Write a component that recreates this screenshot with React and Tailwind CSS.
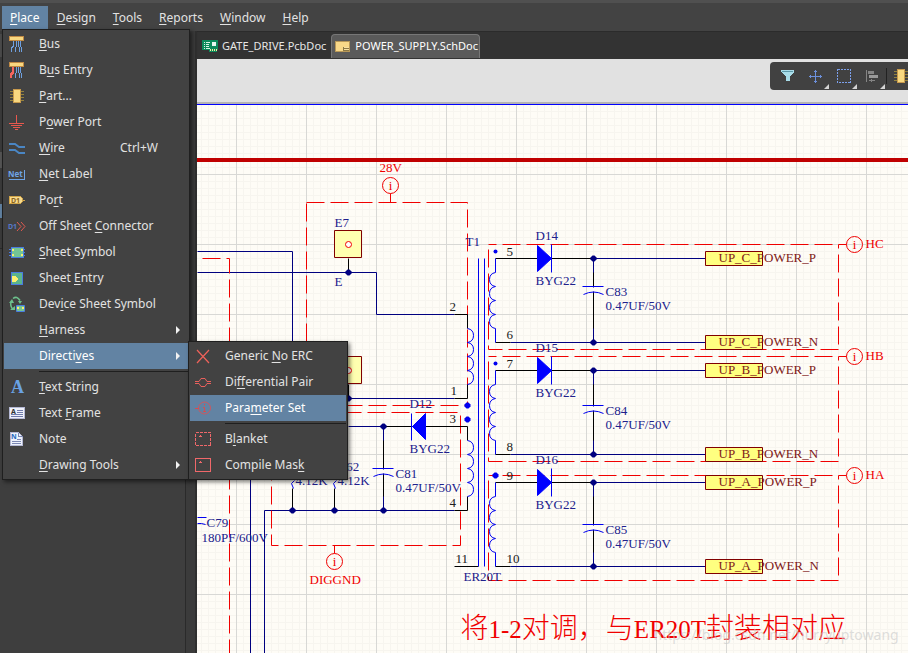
import clsx from "clsx";

const MENU_BAR = ["&Place", "&Design", "&Tools", "&Reports", "&Window", "&Help"];

const PLACE_MENU = [
  { label: "&Bus", icon: "bus" },
  { label: "B&us Entry", icon: "busEntry" },
  { label: "&Part...", icon: "part" },
  { label: "P&ower Port", icon: "power" },
  { label: "&Wire", icon: "wire", shortcut: "Ctrl+W" },
  { label: "&Net Label", icon: "net" },
  { label: "Po&rt", icon: "port" },
  { label: "Off Sheet &Connector", icon: "offSheet" },
  { label: "&Sheet Symbol", icon: "sheetSymbol" },
  { label: "Sheet &Entry", icon: "sheetEntry" },
  { label: "Dev&ice Sheet Symbol", icon: "device" },
  { label: "&Harness", arrow: true },
  { label: "Directi&ves", arrow: true, active: true, submenu: true },
  { separator: true },
  { label: "&Text String", icon: "textString" },
  { label: "Text &Frame", icon: "textFrame" },
  { label: "Note", icon: "note" },
  { label: "&Drawing Tools", arrow: true },
];

const DIRECTIVES_MENU = [
  { label: "Generic &No ERC", icon: "noErc" },
  { label: "Di&fferential Pair", icon: "diffPair" },
  { label: "Para&meter Set", icon: "paramSet", active: true },
  { separator: true },
  { label: "B&lanket", icon: "blanket" },
  { label: "Compile Mas&k", icon: "mask" },
];

const busBar = <path d="M0.5 0.5h14v4h-14z" fill="#f8d880" stroke="#c08a45" />;

const ICONS = {
  bus: (
    <>
      {busBar}
      <path d="M4.500 5v5l-2 2v4M7.500 5v5l-1 2v4M9.500 5v5l1 2v4M11.500 5v5l1 2v4" fill="none" stroke="#6ea0e0" />
    </>
  ),
  busEntry: (
    <>
      {busBar}
      <path d="M7.500 5v5l-1 2v4M9.500 5v5l1 2v4M11.500 5v5l1 2v4" fill="none" stroke="#6ea0e0" />
      <path d="M3 5h2v6l-2 2v3h-2v-5l2-1z" fill="#f4645c" />
    </>
  ),
  part: (
    <>
      <path d="M1 3.500h14M1 6.500h14M1 9.500h14M1 12.500h14" stroke="#94823e" />
      <path d="M4.500 1.500h7v13h-7z" fill="#f8d880" stroke="#c89a4c" />
    </>
  ),
  power: (
    <path d="M7.500 1v9M0 9.500h15M2 11.500h11M4 13.500h7M6 15.500h3" stroke="#e8584e" fill="none" />
  ),
  wire: (
    <path d="M0 4h6l4 3h6M0 10h6l4 3h6" stroke="#4a86c4" strokeWidth="2" fill="none" />
  ),
  net: (
    <>
      <text x="-1" y="11" fontSize="8" fontWeight="700" fill="#6ea4e6">Net</text>
      <path d="M0 13.500h16M15.500 4v9" stroke="#6ea4e6" />
    </>
  ),
  port: (
    <>
      <path d="M0.500 4.500h11l2 2v3l-2 2h-11z" fill="#f8dc90" stroke="#d0a448" />
      <path d="M13 8.500h3" stroke="#d0a448" />
      <text x="2" y="11" fontSize="7" fontWeight="700" fill="#8a6420">D1</text>
    </>
  ),
  offSheet: (
    <>
      <text x="-1" y="11" fontSize="7" fontWeight="700" fill="#5878c8">D1</text>
      <path d="M8 4l4 4.500-4 4.500M12 4l4 4.500-4 4.500" fill="none" stroke="#e05a50" />
    </>
  ),
  sheetSymbol: (
    <>
      <path d="M2.500 3.500h12v10h-12z" fill="#74c494" stroke="#4a7ce0" />
      <path d="M0 5.500h3M0 8.500h3M0 11.500h3M14 5.500h2M14 8.500h2M14 11.500h2" stroke="#4a7ce0" />
      <path d="M3 5h2v2h-2zM3 10h2v2h-2zM12 5h2v2h-2zM12 10h2v2h-2z" fill="#f8ee70" />
    </>
  ),
  sheetEntry: (
    <>
      <path d="M2.500 2.500h11v12h-11z" fill="#5cb48c" stroke="#4a7ce0" strokeWidth="1" />
      <path d="M3 6h3l3 3-3 3h-3z" fill="#fcf070" />
    </>
  ),
  device: (
    <>
      <path d="M4 2.500q4-3 7 2" fill="none" stroke="#6cc08c" strokeWidth="1.500" />
      <path d="M2.500 5q-2 4 1 8" fill="none" stroke="#6cc08c" strokeWidth="1.500" />
      <path d="M0 7l3-4 2 4zM9 5h4l-2 3zM1 14h5v-4z" fill="#6cc08c" />
      <path d="M7.500 9.500h8v6h-8z" fill="#74c494" stroke="#4a7ce0" />
      <path d="M8 11h2v2h-2zM13 11h2v2h-2z" fill="#f8ee70" />
    </>
  ),
  textString: (
    <text x="2" y="14" fontSize="18" fontWeight="700" fontFamily="Liberation Serif, serif" fill="#6aa2e4">A</text>
  ),
  textFrame: (
    <>
      <path d="M0.500 2.500h15v11h-15z" fill="#f0f2fa" stroke="#b4b8d4" />
      <path d="M8 5.500h6M8 7.500h6M2 9.500h12M2 11.500h12" stroke="#707cac" />
      <text x="2" y="9" fontSize="7" fontWeight="700" fill="#333">A</text>
    </>
  ),
  note: (
    <>
      <path d="M1.500 1.500h8l4 4v9h-12z" fill="#eef2fc" stroke="#b4b8d4" />
      <path d="M9.500 1.500v4h4M8 8.500h4M3 10.500h9M3 12.500h9" fill="none" stroke="#7c88b4" />
      <text x="2" y="8" fontSize="7" fontWeight="700" fill="#2468c0">N</text>
    </>
  ),
  noErc: <path d="M2 2l12 13M14 2l-12 13" stroke="#f0625a" strokeWidth="1.200" fill="none" />,
  diffPair: (
    <path
      d="M0 7.500h4l2-3h4l2 3h4M0 9.500h4l2 3h4l2-3h4"
      fill="none"
      stroke="#e8605c"
    />
  ),
  paramSet: (
    <>
      <circle cx="9.500" cy="8" r="6" fill="none" stroke="#cc5860" />
      <path d="M0 8.500h4M9.500 4v1.500M8 7.500h1.500v4M8 11.500h3" stroke="#d84c50" fill="none" />
    </>
  ),
  blanket: (
    <>
      <path d="M0.500 1.500h15v13h-15z" fill="none" stroke="#f0686a" strokeDasharray="3 1" />
      <path d="M5 4l2 2h-4z" fill="#f0686a" />
    </>
  ),
  mask: (
    <>
      <path d="M0.500 1.500h15v13h-15z" fill="none" stroke="#f0686a" />
      <path d="M5 4l2 2h-4z" fill="#f0686a" />
    </>
  ),
  pcb: (
    <>
      <path d="M0 2h16v10h-1v2h-8v-2h-7z" fill="#0d8a5c" />
      <path d="M2 4.500h1M4 4.500h4M2 6.500h1M4 6.500h3M2 8.500h1M4 8.500h3M2 10.500h1M4 10.500h4" stroke="#d8f4e4" />
      <path d="M10 4h4v4h-4z" fill="#e8f8f0" />
      <path d="M8 11h1v2h-1zM10 11h1v2h-1zM12 11h1v2h-1zM14 11h1v2h-1z" fill="#f4f0a0" />
    </>
  ),
  sch: (
    <>
      <path d="M0.500 2.500h14v10h-14z" fill="#f8d888" stroke="#b89858" />
      <path d="M8 8h6v4h-6z" fill="#8c7844" />
      <path d="M9 8.500h5M9 10.500h5" stroke="#f8e0a0" />
    </>
  ),
  filter: (
    <>
      <path d="M1 2h13v2l-4 5v4h-4v-4l-5-5z" fill="#a8dce8" />
      <path d="M2 3.500h11" stroke="#5c98a8" />
    </>
  ),
  cross: (
    <path
      d="M7.500 2v13M1 8.500h13M6 3.500h3M6 13.500h3M2.500 7v3M12.500 7v3"
      stroke="#6c90dc"
      fill="none"
    />
  ),
  select: (
    <path d="M1.500 1.500h13v13h-13z" fill="none" stroke="#7ca0ec" strokeDasharray="2 1" />
  ),
  align: (
    <>
      <path d="M2 2h1v12h-1zM4 3h6v3h-6z" fill="#858585" />
      <path d="M5 7h9v3h-9z" fill="#9a9a9a" />
      <path d="M5 12.500h6M7.500 11v3" stroke="#858585" />
    </>
  ),
};

const SMOOTH_ICONS = ["noErc", "paramSet", "diffPair", "offSheet", "device", "wire"];

function Icon({ name }) {
  return (
    <svg
      className="size-4 shrink-0 overflow-visible"
      viewBox="0 0 16 16"
      fontFamily="Noto Sans, sans-serif"
      shapeRendering={SMOOTH_ICONS.includes(name) ? "auto" : "crispEdges"}
      aria-hidden="true"
    >
      {ICONS[name]}
    </svg>
  );
}

// "&" marks the letter that is underlined
function Mnemonic({ text }) {
  const at = text.indexOf("&");
  if (at < 0) return <span>{text}</span>;
  return (
    <span>
      {text.slice(0, at)}
      <u className="underline-offset-2">{text[at + 1]}</u>
      {text.slice(at + 2)}
    </span>
  );
}

function Menu({ items, className }) {
  return (
    <ul
      role="menu"
      className={clsx(
        "absolute border border-[#1f1f1f] bg-[#424242] p-px text-xs text-[#e2e2e2] shadow-[2px_2px_4px_rgba(0,0,0,0.5)]",
        className
      )}
    >
      {items.map((item, i) =>
        item.separator ? (
          <li key={i} role="separator" className="ml-[35px] h-[5px] pt-0.5">
            <div className="h-px bg-[#1f1f1f]" />
          </li>
        ) : (
          <li key={i} role="none" className="relative">
            <button
              role="menuitem"
              className={clsx(
                "flex h-[26px] w-full items-center whitespace-nowrap text-left",
                item.active && "bg-[#6283a3] text-white"
              )}
            >
              <span className="flex w-[35px] shrink-0 pl-[5px]">{item.icon && <Icon name={item.icon} />}</span>
              <Mnemonic text={item.label} />
              {item.shortcut && <span className="mr-[30px] ml-auto">{item.shortcut}</span>}
              {item.arrow && (
                <svg className="mr-2 ml-auto h-2 w-1" viewBox="0 0 4 8" aria-hidden="true">
                  <path d="M0 0l4 4-4 4z" fill="#f2f2f2" />
                </svg>
              )}
            </button>
            {item.submenu && <Menu items={DIRECTIVES_MENU} className="-top-0.5 left-full w-40" />}
          </li>
        )
      )}
    </ul>
  );
}

function MenuBar() {
  return (
    <nav className="flex h-[31px] shrink-0 items-start gap-px border-t-[3px] border-[#505050] bg-[#434343] pt-[3px] pl-0.5 text-xs text-[#e2e2e2]">
      {MENU_BAR.map((label, i) => (
        <div key={label} className="relative">
          <button className={clsx("block h-[23px] px-2", i === 0 && "bg-[#6283a3] text-white")}>
            <Mnemonic text={label} />
          </button>
          {i === 0 && <Menu items={PLACE_MENU} className="top-full left-0 z-10 w-[188px]" />}
        </div>
      ))}
    </nav>
  );
}

function Toolbar() {
  return (
    <div className="mt-[3px] flex h-7 w-[138px] items-center overflow-hidden rounded-l-sm bg-[#414141] pl-2.5">
      {["filter", "cross", "select", "align"].map((name) => (
        <button
          key={name}
          aria-label={name}
          className={clsx("relative flex h-7 shrink-0 items-center", name === "align" ? "w-[22px]" : "w-7")}
        >
          <Icon name={name} />
          {name !== "filter" && (
            <svg className="absolute bottom-px left-4 size-[5px]" viewBox="0 0 5 5" aria-hidden="true">
              <path d="M5 0v5h-5z" fill="#d4d4d4" />
            </svg>
          )}
        </button>
      ))}
      <button aria-label="part" className="flex shrink-0 border-l border-[#222] pl-1.5">
        <Icon name="part" />
      </button>
    </div>
  );
}

function Dots({ at, color = "#000080" }) {
  return at.map(([x, y]) => (
    <path key={`${x}-${y}`} d={`M${x - 1} ${y - 3}h2l2 2v2l-2 2h-2l-2 -2v-2z`} fill={color} />
  ));
}

function Directive({ x, y, stem }) {
  return (
    <g>
      <circle cx={x} cy={y} r="8" fill="none" stroke="#f00000" />
      <path d={stem} stroke="#f00000" />
      <text x={x} y={y + 4} textAnchor="middle" fill="#f00000">i</text>
    </g>
  );
}

function Port({ y, name }) {
  return (
    <g>
      <path d={`M705 ${y - 7}h57v14h-57z`} fill="#ffff80" stroke="#800000" />
      <text x="718" y={y + 3} fill="#801818">{name}</text>
    </g>
  );
}

function TestPoint({ x, y }) {
  return (
    <g>
      <path d={`M${x} ${y}h27v27h-27z`} fill="#ffffb0" stroke="#800000" />
      <circle cx={x + 14} cy={y + 14} r="3" fill="#fff" stroke="#f00000" />
      <path d={`M${x + 14} ${y + 28}v14`} stroke="#000" />
    </g>
  );
}

function Capacitor({ x, y, top, bottom }) {
  return (
    <g fill="none">
      <path d={`M${x} ${top}V${bottom}`} stroke="#000080" />
      <path d={`M${x} ${top + 14}V${y}M${x} ${y + 6}V${bottom - 14}`} stroke="#000" />
      <path d={`M${x - 11} ${y}h21`} stroke="#0000f0" />
      <path d={`M${x} ${y + 1}v4`} stroke="#fefcf6" />
      <path d={`M${x - 10} ${y + 8}q10 -5 20 0`} stroke="#0000f0" />
    </g>
  );
}

const OUTPUTS = [
  { y: 258, cap: 28, pins: [5, 6], diode: "D14", capName: "C83", net: "C", tag: "HC", box: 244 },
  { y: 370, cap: 35, pins: [7, 8], diode: "D15", capName: "C84", net: "B", tag: "HB", box: 356 },
  { y: 482, cap: 42, pins: [9, 10], diode: "D16", capName: "C85", net: "A", tag: "HA", box: 475 },
];

function Output({ y, cap, pins, diode, capName, net, tag, box }) {
  const low = y + 84;
  return (
    <g>
      <g fill="none" stroke="#f00000" strokeDasharray="18 6">
        <path d={`M488 ${box}H838`} strokeDashoffset="10" />
        <path d={`M838 ${box}V${box + 105}`} strokeDashoffset="14" />
        <path d={`M488 ${box + 105}H838`} strokeDashoffset="4" />
        <path d={`M488 ${box}V${box + 105}`} strokeDashoffset="19" />
      </g>
      <path d={`M593 ${y}H705M510 ${low}H705`} stroke="#000080" />
      <path d={`M495 ${y}H593M495 ${low}H510`} stroke="#000" />
      <path
        d={`M495 ${y}v14q-6 1 -6 7t6 7q-6 1 -6 7t6 7q-6 1 -6 7t6 7q-6 1 -6 7t6 7v14`}
        fill="none"
        stroke="#0000f0"
      />
      <path d={`M537 ${y - 13}v26l14 -13z`} fill="#0000ff" stroke="#0000ff" />
      <path d={`M551 ${y - 14}v28`} stroke="#0000f0" />
      <Capacitor x={593} y={y + cap} top={y} bottom={low} />
      <Dots at={[[593, y], [593, low]]} />
      <g fill="#202020">
        <text x="506" y={y - 3}>{pins[0]}</text>
        <text x="506" y={low - 4}>{pins[1]}</text>
      </g>
      <g fill="#20208c">
        <text x="535" y={y - 19}>{diode}</text>
        <text x="535" y={y + 26}>BYG22</text>
        <text x="605" y={y + cap + 9}>{capName}</text>
        <text x="605" y={y + cap + 23}>0.47UF/50V</text>
      </g>
      <Port y={y} name={`UP_${net}_POWER_P`} />
      <Port y={low} name={`UP_${net}_POWER_N`} />
      <Directive x={854} y={box} stem={`M838 ${box}H846`} />
      <text x="865" y={box + 3} fill="#f00000">{tag}</text>
    </g>
  );
}

function Schematic() {
  return (
    <svg className="block min-h-0 w-full flex-1" fontFamily="Liberation Serif, serif" fontSize="13">
      <defs>
        <pattern id="minor" width="7" height="7" patternUnits="userSpaceOnUse" x="4" y="0">
          <path d="M0 0h7v1h-7zM0 0h1v7h-1z" fill="#f7f5ef" />
        </pattern>
        <pattern id="major" width="70" height="70" patternUnits="userSpaceOnUse" x="39" y="70">
          <path d="M0 0h70v1h-70zM0 0h1v70h-1z" fill="#d8d8d5" />
        </pattern>
      </defs>
      <rect width="100%" height="100%" fill="#fefcf6" />
      <rect width="100%" height="100%" fill="url(#minor)" />
      <rect width="100%" height="100%" fill="url(#major)" />
      <rect width="100%" height="1" fill="#0000ff" />
      <rect y="54" width="100%" height="4" fill="#c00000" />

      <g transform="translate(-196.5 -103.5)">
        <g fill="none" stroke="#000080">
          <path d="M197 251H292V343" />
          <path d="M197 272H376V314H454" />
          <path d="M348 398H454M348 426H383M454 510H264V660M250 343V660" />
        </g>
        <g fill="none" stroke="#f00000" strokeDasharray="18 6">
          <path d="M202 258H229V680" />
          <path d="M306 202H467V405" />
          <path d="M467 405H306V202" strokeDashoffset="15" />
          <path d="M271 412H460V545H271V412" />
        </g>
        <g fill="none" stroke="#000">
          <path d="M454 314H467V328M454 398H467V384M383 426H467V440M454 510H467V496M454 566H478" />
          <path d="M292 488V510M334 488V510" />
        </g>
        <g fill="none" stroke="#0000f0">
          <path d="M467 328q6 1 6 7t-6 7q6 1 6 7t-6 7q6 1 6 7t-6 7q6 1 6 7t-6 7" />
          <path d="M467 440q6 1 6 7t-6 7q6 1 6 7t-6 7q6 1 6 7t-6 7q6 1 6 7t-6 7" />
          <path d="M478 258V566M484 258V566" />
          <path d="M411 413V440" />
          <path d="M197 517H206M197 523H201L205 524" />
          <path d="M294 480l-3 3 2 5M336 480l-3 3 2 5" />
        </g>
        <path d="M425 413v26l-13 -13z" fill="#0000ff" stroke="#0000ff" />

        <TestPoint x={334} y={230} />
        <TestPoint x={334} y={356} />
        <Capacitor x={383} y={468} top={426} bottom={510} />
        {OUTPUTS.map((output) => (
          <Output key={output.tag} {...output} />
        ))}
        <Dots at={[[348, 272], [348, 398], [383, 426], [383, 510], [292, 510], [334, 510]]} />
        <Dots at={[[467, 405], [467, 419], [495, 475]]} color="#0000f0" />
        <circle cx="495" cy="251" r="2" fill="#0000f0" />
        <circle cx="495" cy="363" r="2" fill="#0000f0" />

        <g fill="#202020">
          <text x="449" y="310">2</text>
          <text x="450" y="394">1</text>
          <text x="449" y="422">3</text>
          <text x="449" y="506">4</text>
          <text x="455" y="562">11</text>
        </g>
        <g fill="#20208c">
          <text x="334" y="226">E7</text>
          <text x="334" y="285">E</text>
          <text x="465" y="245">T1</text>
          <text x="409" y="407">D12</text>
          <text x="409" y="452">BYG22</text>
          <text x="337" y="470">R62</text>
          <text x="295" y="484">4.12K</text>
          <text x="337" y="484">4.12K</text>
          <text x="395" y="477">C81</text>
          <text x="395" y="491">0.47UF/50V</text>
          <text x="206" y="526">C79</text>
          <text x="201" y="541">180PF/600V</text>
          <text x="463" y="580">ER20T</text>
        </g>
        <Directive x={390} y={185} stem="M390 193V202" />
        <Directive x={334} y={561} stem="M334 545V553" />
        <g fill="#f00000">
          <text x="379" y="171">28V</text>
          <text x="309" y="583">DIGGND</text>
        </g>
        <text
          x="460"
          y="637"
          fill="#f00000"
          fontSize="28"
          fontWeight="300"
          fontFamily="Noto Sans CJK SC, sans-serif"
        >
          将
          <tspan fontSize="25" fontFamily="Liberation Serif, serif">1-2</tspan>
          对调，与
          <tspan fontSize="25" fontFamily="Liberation Serif, serif">ER20T</tspan>
          封装相对应
        </text>
        <text x="653" y="639" fill="#c8c8c8" fillOpacity="0.6" fontSize="14" fontFamily="Noto Sans, sans-serif">
          https://blog.csdn.net/hurryuptowang
        </text>
      </g>
    </svg>
  );
}

function SidePanel() {
  return (
    <aside className="flex w-[197px] shrink-0 border-r-2 border-[#2f2f2f] bg-[#3b3b3b] pt-[3px]">
      <div className="flex flex-1 flex-col border-r border-[#2a2a2a]">
        <div className="h-[23px] bg-[#4b4b4b]" />
        <div className="mt-[95px] h-4 bg-[#555]" />
        <div className="mt-[36px] h-3.5 bg-[#6283a3]" />
        <div className="mt-[30px] flex-1 border-t border-[#2a2a2a] bg-[#3e3e3e]" />
      </div>
      <div className="w-[9px]" />
    </aside>
  );
}

function Editor() {
  return (
    <main className="flex min-w-0 flex-1 flex-col">
      <div className="flex h-7 shrink-0 items-end gap-[5px] border-t border-[#2b2b2b] bg-[#333] pb-px pl-[5px] text-[11px] text-[#e6e6e6]">
        <button className="flex h-6 items-center gap-1">
          <Icon name="pcb" />
          GATE_DRIVE.PcbDoc
        </button>
        <button className="flex h-6 items-center gap-1 rounded-t border border-b-0 border-[#777] bg-[#5a5a5a] pr-px pl-[3px] text-white">
          <Icon name="sch" />
          POWER_SUPPLY.SchDoc
        </button>
      </div>
      <div className="flex h-[45px] shrink-0 justify-end border-b-2 border-[#b4b4b4] bg-[#e1e1e1]">
        <Toolbar />
      </div>
      <Schematic />
    </main>
  );
}

export default function App() {
  return (
    <div className="flex h-screen flex-col overflow-hidden bg-[#333] font-['Noto_Sans',sans-serif]">
      <MenuBar />
      <div className="flex min-h-0 flex-1">
        <SidePanel />
        <Editor />
      </div>
    </div>
  );
}
